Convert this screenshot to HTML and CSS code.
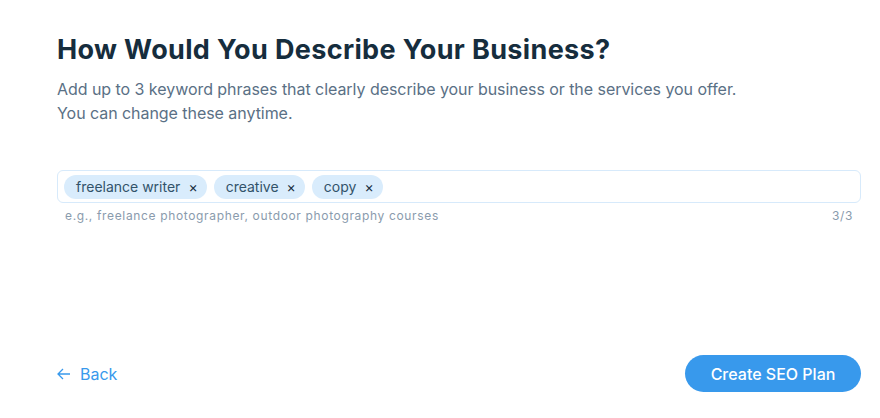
FILE: index.html
```html
<!DOCTYPE html>
<html lang="en">
<head>
  <meta charset="UTF-8">
  <title>SEO Setup</title>
  <link rel="stylesheet" href="styles.css">
</head>
<body>
  <div class="page">
    <div class="intro">
      <h1>How Would You Describe Your Business?</h1>
      <p>Add up to 3 keyword phrases that clearly describe your business or the services you offer.<br>You can change these anytime.</p>
    </div>

    <div class="field">
      <div class="tags">
        <span class="tag">freelance writer <span class="remove">&times;</span></span>
        <span class="tag">creative <span class="remove">&times;</span></span>
        <span class="tag">copy <span class="remove">&times;</span></span>
      </div>
      <div class="hint">
        <span>e.g., freelance photographer, outdoor photography courses</span>
        <span>3/3</span>
      </div>
    </div>

    <div class="footer">
      <a class="back" href="#">
        <svg width="14" height="12" viewBox="0 0 14 12"><path d="M13 6H1.5M6 1L1 6l5 5" fill="none" stroke="currentColor" stroke-width="1.3"/></svg>
        Back
      </a>
      <button class="primary">Create SEO Plan</button>
    </div>
  </div>
</body>
</html>
```

FILE: styles.css
```css
body {
  margin: 0;
  background: #fff;
  font-family: Inter, "Noto Sans", sans-serif;
}

.page {
  width: 804px;
  margin-left: 57px;
  height: 418px;
  display: flex;
  flex-direction: column;
}

h1 {
  margin: 32px 0 0;
  font-size: 27px;
  font-weight: 700;
  letter-spacing: 0.35px;
  color: #162d3d;
  line-height: 35px;
}

.intro p {
  margin: 10px 0 0;
  font-size: 16px;
  line-height: 24px;
  letter-spacing: -0.05px;
  color: #5a7085;
}

.field {
  margin-top: 45px;
}

.tags {
  display: flex;
  gap: 7px;
  height: 31px;
  padding: 0 6px;
  align-items: center;
  border: 1px solid #d7eafb;
  border-radius: 6px;
}

.tag {
  display: flex;
  align-items: center;
  height: 24px;
  padding: 0 9px 0 12px;
  border-radius: 12px;
  background: #d9ecfc;
  color: #32536a;
  font-size: 14px;
}

.remove {
  margin-left: 8px;
  font-size: 14px;
  color: #162d3d;
}

.hint {
  display: flex;
  justify-content: space-between;
  padding: 5px 8px 0;
  font-size: 12px;
  letter-spacing: 0.65px;
  color: #8a9bad;
}

.footer {
  margin-top: auto;
  margin-bottom: 26px;
  display: flex;
  justify-content: space-between;
  align-items: center;
}

.back {
  display: flex;
  align-items: center;
  gap: 9px;
  color: #3899ec;
  font-size: 16px;
  text-decoration: none;
}

.primary {
  width: 176px;
  height: 37px;
  border: none;
  border-radius: 19px;
  background: #3899ec;
  color: #fff;
  font-family: inherit;
  font-size: 16px;
  font-weight: 500;
}
```
